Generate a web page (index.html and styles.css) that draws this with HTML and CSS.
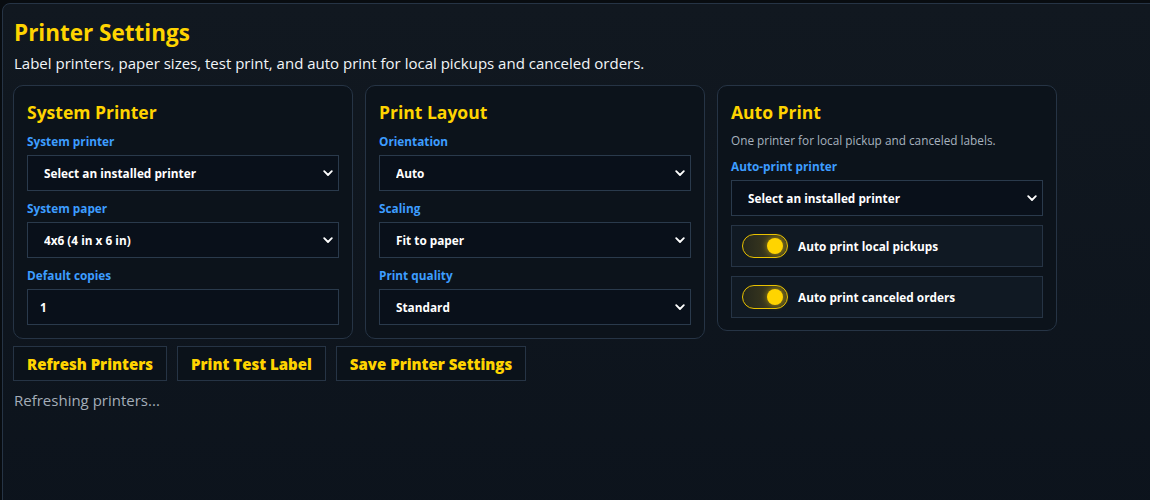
FILE: index.html
```html
<!DOCTYPE html>
<html lang="en">
<head>
<meta charset="utf-8">
<title>Printer Settings</title>
<link rel="stylesheet" href="styles.css">
</head>
<body>
<main class="panel">
  <h1 class="page-title">Printer Settings</h1>
  <p class="page-sub">Label printers, paper sizes, test print, and auto print for local pickups and canceled orders.</p>

  <div class="cards">
    <section class="card">
      <h2 class="card-title">System Printer</h2>
      <div class="field">
        <label class="field-label">System printer</label>
        <div class="select-wrap">
          <select class="select"><option>Select an installed printer</option></select>
          <svg class="chev" width="10" height="7" viewBox="0 0 10 7"><path d="M1.2 1.2 L5 5 L8.8 1.2" fill="none" stroke="#fff" stroke-width="1.8" stroke-linecap="round" stroke-linejoin="round"/></svg>
        </div>
      </div>
      <div class="field">
        <label class="field-label">System paper</label>
        <div class="select-wrap">
          <select class="select"><option>4x6 (4 in x 6 in)</option></select>
          <svg class="chev" width="10" height="7" viewBox="0 0 10 7"><path d="M1.2 1.2 L5 5 L8.8 1.2" fill="none" stroke="#fff" stroke-width="1.8" stroke-linecap="round" stroke-linejoin="round"/></svg>
        </div>
      </div>
      <div class="field">
        <label class="field-label">Default copies</label>
        <input class="input" type="text" value="1">
      </div>
    </section>

    <section class="card">
      <h2 class="card-title">Print Layout</h2>
      <div class="field">
        <label class="field-label">Orientation</label>
        <div class="select-wrap">
          <select class="select"><option>Auto</option></select>
          <svg class="chev" width="10" height="7" viewBox="0 0 10 7"><path d="M1.2 1.2 L5 5 L8.8 1.2" fill="none" stroke="#fff" stroke-width="1.8" stroke-linecap="round" stroke-linejoin="round"/></svg>
        </div>
      </div>
      <div class="field">
        <label class="field-label">Scaling</label>
        <div class="select-wrap">
          <select class="select"><option>Fit to paper</option></select>
          <svg class="chev" width="10" height="7" viewBox="0 0 10 7"><path d="M1.2 1.2 L5 5 L8.8 1.2" fill="none" stroke="#fff" stroke-width="1.8" stroke-linecap="round" stroke-linejoin="round"/></svg>
        </div>
      </div>
      <div class="field">
        <label class="field-label">Print quality</label>
        <div class="select-wrap">
          <select class="select"><option>Standard</option></select>
          <svg class="chev" width="10" height="7" viewBox="0 0 10 7"><path d="M1.2 1.2 L5 5 L8.8 1.2" fill="none" stroke="#fff" stroke-width="1.8" stroke-linecap="round" stroke-linejoin="round"/></svg>
        </div>
      </div>
    </section>

    <section class="card card-short">
      <h2 class="card-title">Auto Print</h2>
      <p class="card-desc">One printer for local pickup and canceled labels.</p>
      <div class="field">
        <label class="field-label">Auto-print printer</label>
        <div class="select-wrap">
          <select class="select"><option>Select an installed printer</option></select>
          <svg class="chev" width="10" height="7" viewBox="0 0 10 7"><path d="M1.2 1.2 L5 5 L8.8 1.2" fill="none" stroke="#fff" stroke-width="1.8" stroke-linecap="round" stroke-linejoin="round"/></svg>
        </div>
      </div>
      <div class="toggle-row">
        <span class="switch"><span class="knob"></span></span>
        <span class="toggle-label">Auto print local pickups</span>
      </div>
      <div class="toggle-row">
        <span class="switch"><span class="knob"></span></span>
        <span class="toggle-label">Auto print canceled orders</span>
      </div>
    </section>
  </div>

  <div class="actions">
    <button class="btn">Refresh Printers</button>
    <button class="btn">Print Test Label</button>
    <button class="btn">Save Printer Settings</button>
  </div>
  <p class="status">Refreshing printers...</p>
</main>
</body>
</html>
```

FILE: styles.css
```css
* { box-sizing: border-box; }

html, body {
  margin: 0;
  padding: 0;
  background: #080c10;
  height: 100%;
  overflow: hidden;
}

body {
  font-family: "Open Sans", "Noto Sans", "Liberation Sans", sans-serif;
  color: #ffffff;
  padding: 3px 0 0 2px;
}

.panel {
  min-height: 540px;
  width: 1160px;
  border: 1px solid #263445;
  border-radius: 8px;
  background: linear-gradient(180deg, #111820 0%, #0c131c 100%);
  padding: 12px 12px 12px 10px;
}

.page-title {
  margin: 0 0 3px 1px;
  padding-top: 1px;
  font-size: 22.5px;
  line-height: 32px;
  font-weight: 700;
  color: #ffd400;
}

.page-sub {
  margin: 0 0 11px 1px;
  font-size: 15px;
  line-height: 22px;
  color: #f2f5f8;
}

.cards {
  display: grid;
  grid-template-columns: repeat(3, 340px);
  gap: 12px;
  align-items: start;
}

.card {
  border: 1px solid #263445;
  border-radius: 10px;
  background: #0c131b;
  padding: 13px 13px 13px;
}

.card-short { padding-bottom: 12px; }

.card-title {
  margin: 0 0 9px;
  font-size: 17.5px;
  line-height: 26px;
  font-weight: 700;
  color: #ffd400;
}

.card-desc {
  margin: -1px 0 10px;
  font-size: 11.8px;
  line-height: 15px;
  padding-bottom: 1px;
  color: #a7b2bf;
}

.field + .field { margin-top: 10px; }

.field-label {
  display: block;
  margin-bottom: 6px;
  font-size: 11.8px;
  line-height: 15px;
  font-weight: 700;
  color: #3d9dff;
}

.select-wrap {
  position: relative;
}

.select, .input {
  display: block;
  width: 100%;
  height: 36px;
  margin: 0;
  border: 1px solid #2a3a4c;
  border-radius: 0;
  background: #09101a;
  color: #ffffff;
  font-family: inherit;
  font-size: 11.8px;
  font-weight: 700;
  outline: none;
}

.select {
  -webkit-appearance: none;
  appearance: none;
  padding: 0 24px 0 16px;
}

.input {
  padding: 0 12px;
}

.chev {
  position: absolute;
  right: 6px;
  top: 15px;
  pointer-events: none;
}

.toggle-row {
  margin-top: 9px;
  height: 42px;
  display: flex;
  align-items: center;
  gap: 10px;
  padding: 0 10px;
  border: 1px solid #263445;
  background: #101923;
}

.switch {
  position: relative;
  width: 46px;
  height: 24px;
  flex: none;
  border: 1.5px solid #e9c200;
  border-radius: 12px;
  background: linear-gradient(90deg, #24261c 0%, #4a4620 100%);
  display: flex;
  align-items: center;
  justify-content: flex-end;
  padding-right: 4px;
}

.knob {
  width: 16px;
  height: 16px;
  border-radius: 50%;
  background: #ffd400;
  box-shadow: 0 0 6px rgba(255, 212, 0, 0.55);
}

.toggle-label {
  font-size: 11.8px;
  font-weight: 700;
  color: #ffffff;
}

.actions {
  display: flex;
  gap: 10px;
  margin-top: 7px;
}

.btn {
  height: 35px;
  padding: 0 13px;
  border: 1px solid #263445;
  border-radius: 0;
  background: #0b121a;
  color: #ffd400;
  font-family: inherit;
  font-size: 15px;
  font-weight: 800;
  cursor: pointer;
}

.status {
  margin: 8px 0 0 1px;
  font-size: 15px;
  line-height: 22px;
  color: #a3adb8;
}
```
